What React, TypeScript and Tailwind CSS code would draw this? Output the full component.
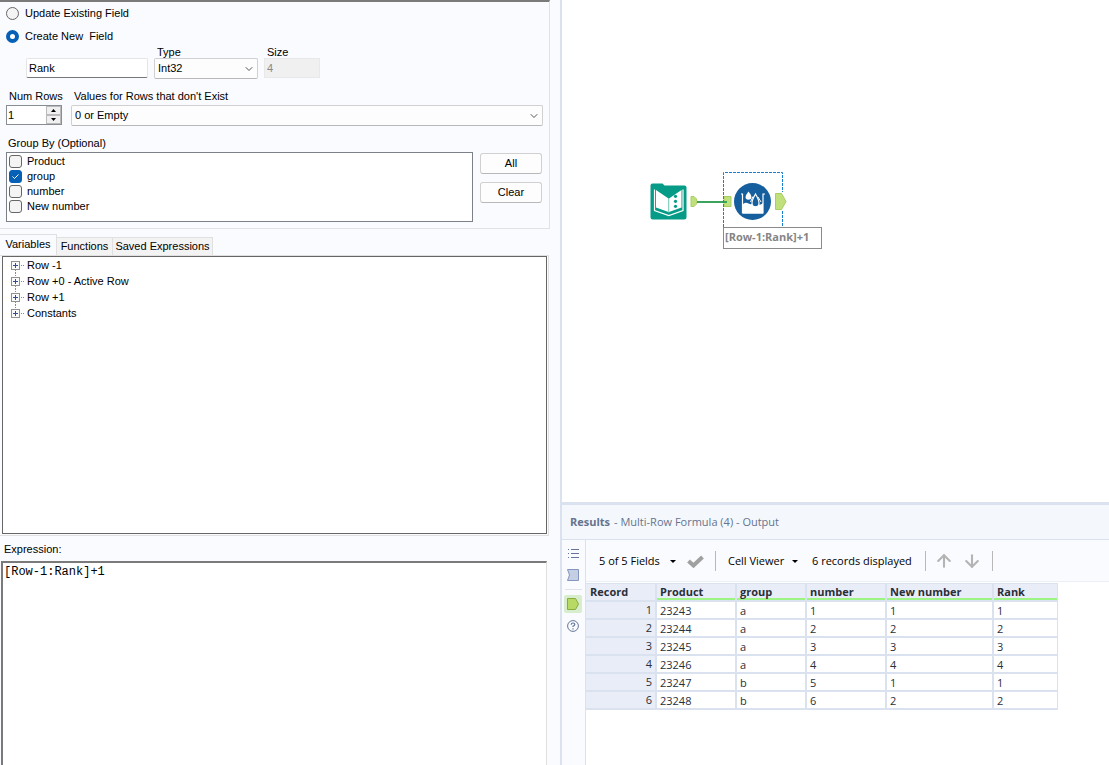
import { useState } from "react";
import type { ReactNode } from "react";
import { ArrowDown, ArrowUp, ChevronDown } from "lucide-react";

const groupFields = ["Product", "group", "number", "New number"];
const treeNodes = ["Row -1", "Row +0 - Active Row", "Row +1", "Constants"];

const columns = [
  { name: "Record", width: "w-[71px]" },
  { name: "Product", width: "w-20" },
  { name: "group", width: "w-[70px]" },
  { name: "number", width: "w-20" },
  { name: "New number", width: "w-[107px]" },
  { name: "Rank", width: "w-16" },
];

const records = [
  ["23243", "a", "1", "1", "1"],
  ["23244", "a", "2", "2", "2"],
  ["23245", "a", "3", "3", "3"],
  ["23246", "a", "4", "4", "4"],
  ["23247", "b", "5", "1", "1"],
  ["23248", "b", "6", "2", "2"],
];

function Radio({ id, label, defaultChecked }: { id: string; label: string; defaultChecked?: boolean }) {
  return (
    <>
      <input
        id={id}
        type="radio"
        name="mode"
        defaultChecked={defaultChecked}
        className="size-[13px] appearance-none rounded-full border border-[#666] bg-[#f4f4f4] checked:border-4 checked:border-[#0560b6] checked:bg-white"
      />
      <label htmlFor={id} className="whitespace-pre">{label}</label>
    </>
  );
}

function Select({ id, value }: { id: string; value: string }) {
  return (
    <div className="relative">
      <select
        id={id}
        defaultValue={value}
        className="block h-[21px] w-full appearance-none rounded-xs border border-[#d0d0d0] border-b-[#b8b8b8] bg-[#fdfdfd] pl-[3px] pr-5"
      >
        <option>{value}</option>
      </select>
      <ChevronDown className="pointer-events-none absolute right-[3px] top-[5px] size-3 text-[#555]" strokeWidth={2} />
    </div>
  );
}

function FieldSettings() {
  const [rows, setRows] = useState(1);

  return (
    <section className="mr-[10px] border-r border-b border-t-2 border-[#e0e2e6] border-t-[#7a7a7a] pb-[6px]">
      <div className="flex h-[23px] items-center gap-[6px] pl-[6px]">
        <Radio id="update" label="Update Existing Field" />
      </div>
      <div className="flex h-[21px] items-center gap-[6px] pl-[6px] pt-px">
        <Radio id="create" label="Create New  Field" defaultChecked />
      </div>
      <div className="flex items-start gap-[6px] pl-[26px]">
        <input
          aria-label="Field name"
          defaultValue="Rank"
          className="mt-3 h-5 w-[122px] rounded-xs border border-[#e5e5e5] border-b-[#777] bg-white px-[2px]"
        />
        <div className="w-[104px]">
          <label htmlFor="type" className="block pl-[3px] leading-3">Type</label>
          <Select id="type" value="Int32" />
        </div>
        <div className="w-14">
          <label htmlFor="size" className="block pl-[3px] leading-3">Size</label>
          <input
            id="size"
            disabled
            defaultValue="4"
            className="block h-5 w-full border border-[#e8e8e8] bg-[#f0f0f0] px-[2px] text-[#888]"
          />
        </div>
      </div>

      <div className="mt-[11px] flex gap-[9px] pl-[6px] pr-[6px]">
        <div className="w-14">
          <label htmlFor="rows" className="block whitespace-nowrap pl-[3px] leading-3">Num Rows</label>
          <div className="mt-[3px] flex h-5 border border-[#888c94] bg-white">
            <input
              id="rows"
              value={rows}
              onChange={(e) => setRows(Number(e.target.value) || 0)}
              className="min-w-0 flex-1 px-px"
            />
            <div className="flex w-[15px] flex-col">
              <button
                aria-label="Increase"
                onClick={() => setRows(rows + 1)}
                className="flex flex-1 items-center justify-center border border-[#bbb] bg-[#f0f0f0]"
              >
                <svg width="5" height="3" viewBox="0 0 5 3"><path d="M0 3 2.500 0 5 3z" /></svg>
              </button>
              <button
                aria-label="Decrease"
                onClick={() => setRows(rows - 1)}
                className="flex flex-1 items-center justify-center border border-[#bbb] bg-[#f0f0f0]"
              >
                <svg width="5" height="3" viewBox="0 0 5 3"><path d="M0 0 2.500 3 5 0z" /></svg>
              </button>
            </div>
          </div>
        </div>
        <div className="flex-1">
          <label htmlFor="missing" className="mb-[3px] block pl-[3px] leading-3">
            Values for Rows that don't Exist
          </label>
          <Select id="missing" value="0 or Empty" />
        </div>
      </div>

      <p className="mt-[11px] pl-2 leading-3">Group By (Optional)</p>
      <div className="mt-[3px] flex gap-[7px] pl-[6px] pr-[7px]">
        <ul className="h-[70px] flex-1 border border-[#7c8088] bg-white pl-[2px] pt-px">
          {groupFields.map((field) => (
            <li key={field} className="flex h-[15px] items-center gap-[5px]">
              <span className="relative flex">
                <input
                  id={"group-" + field}
                  type="checkbox"
                  defaultChecked={field === "group"}
                  className="peer size-[13px] appearance-none rounded-[3px] border border-[#666] bg-[#f4f4f4] checked:border-[#0560b6] checked:bg-[#0560b6]"
                />
                <svg
                  className="pointer-events-none absolute inset-0 hidden peer-checked:block"
                  width="13"
                  height="13"
                  viewBox="0 0 13 13"
                  fill="none"
                  stroke="#fff"
                >
                  <path d="m3.500 6.500 2 2 4-4" />
                </svg>
              </span>
              <label htmlFor={"group-" + field}>{field}</label>
            </li>
          ))}
        </ul>
        <div className="flex w-[62px] flex-col gap-2 pt-px">
          <button className="h-[21px] rounded-[3px] border border-[#d0d0d0] border-b-[#b8b8b8] bg-[#fdfdfd]">All</button>
          <button className="h-[21px] rounded-[3px] border border-[#d0d0d0] border-b-[#b8b8b8] bg-[#fdfdfd]">Clear</button>
        </div>
      </div>
    </section>
  );
}

function VariableTree() {
  return (
    <section className="mr-[11px] mt-[5px]">
      <div role="tablist" className="flex h-[21px] items-end">
        <button
          role="tab"
          aria-selected="true"
          className="h-[21px] w-[57px] border-r border-t border-[#e0e0e0] pb-[2px]"
        >
          Variables
        </button>
        <button role="tab" className="h-[18px] w-14 border-r border-t border-[#e0e0e0] bg-[#f3f3f3]">Functions</button>
        <button role="tab" className="h-[18px] w-[100px] border-r border-t border-[#e0e0e0] bg-[#f3f3f3]">
          Saved Expressions
        </button>
      </div>
      <div className="border-b border-r border-t border-[#e0e0e0] pb-px pl-[2px] pr-px">
        <ul role="tree" className="h-[278px] border border-[#666] bg-white pl-2">
          {treeNodes.map((node, i) => (
            <li key={node} role="treeitem" className="flex h-4 items-center gap-[3px]">
              <svg width="13" height="16" viewBox="0 0 13 16" fill="none" shapeRendering="crispEdges">
                {i > 0 && <path d="M4.500 0v4" stroke="#888" strokeDasharray="1 1" />}
                {i < treeNodes.length - 1 && <path d="M4.500 13v3" stroke="#888" strokeDasharray="1 1" />}
                <path d="M10 8.500h3" stroke="#888" strokeDasharray="1 1" />
                <rect x="0.500" y="4.500" width="8" height="8" fill="#fafafa" stroke="#919191" />
                <path d="M2 8.500h5M4.500 6v5" stroke="#2f4f9a" />
              </svg>
              {node}
            </li>
          ))}
        </ul>
      </div>
    </section>
  );
}

function Canvas() {
  return (
    <section className="relative min-h-64 flex-1 bg-white">
      <svg className="absolute left-[88px] top-[170px]" width="140" height="60" viewBox="0 0 140 60">
        {/* input tool */}
        <path d="M2.500 13.500h10l2 2H34.500q2 0 2 2V47q0 2.500-2.500 2.500H3Q0.500 49.500 0.500 47V15.500q0-2 2-2z" fill="#069b87" />
        <path d="M6 20 18.500 28.500V42L6 37.500zM31.500 20 19 28.500V42L31.500 37.500z" fill="#fff" />
        <path d="M4.500 19.500V40.500L18.800 45.500 33 40.500V19.500" fill="none" stroke="#fff" strokeWidth="1.200" />
        <path d="M18.800 28.500v14" stroke="#8fd0c6" />
        <circle cx="25.500" cy="26.300" r="1.600" fill="#069b87" />
        <circle cx="25.500" cy="31.300" r="1.600" fill="#069b87" />
        <circle cx="25.500" cy="36.300" r="1.600" fill="#069b87" />
        {/* connection */}
        <path d="M41 26.500h3q3 2 3 5t-3 5h-3z" fill="#bfe07a" stroke="#a9cd62" />
        <path d="M74 26.500h7v10h-7z" fill="#bfe07a" stroke="#a9cd62" />
        <path d="M47 32h30" stroke="#3ba35b" strokeWidth="2" />
        {/* multi-row formula tool */}
        <circle cx="102.500" cy="31.500" r="18.500" fill="#165f9e" />
        <path d="M91 24h1.500V43h20.500V24h2" fill="none" stroke="#fff" strokeWidth="1.200" />
        <path d="M93 34q3-2 5.500-0.500t5 0 4.500 0.500 5-1V43.500H93z" fill="#fff" />
        <path d="M98.500 21.500q4.500 5.500 2.300 7.500-2.300 1.500-4.600 0Q94 27 98.500 21.500z" fill="#fff" />
        <path d="M100.500 32 103 26.500M108 27l3 5" stroke="#fff" />
        <path
          d="M105.500 24q-3.500 6-3.500 9 0 3.800 3.500 3.800t3.500-3.800Q109 30 105.500 24z"
          fill="#165f9e"
          stroke="#fff"
          strokeWidth="1.200"
        />
        <path d="M125.500 23.500h6l4.500 8-4.500 8h-6z" fill="#bfe07a" stroke="#a9cd62" />
        <path d="M73.500 57V2.500h59V22M132.500 41v16" fill="none" stroke="#1b7fd0" strokeDasharray="3 1" />
      </svg>
      <div className="absolute left-[161px] top-[227px] h-[22px] w-[99px] border border-[#8a8a8a] bg-white px-px font-['Open_Sans',sans-serif] text-[11px] font-bold leading-[18px] text-[#858585]">
        [Row-1:Rank]+1
      </div>
    </section>
  );
}

function RailButton({ label, active, children }: { label: string; active?: boolean; children: ReactNode }) {
  return (
    <button
      aria-label={label}
      className={
        active
          ? "flex size-[18px] items-center justify-center rounded-xs bg-[#d8ecce]"
          : "flex size-[18px] items-center justify-center"
      }
    >
      {children}
    </button>
  );
}

function Results() {
  return (
    <section className="flex min-h-[263px] flex-col border-t-3 border-[#dae2f0] bg-white font-['Open_Sans',sans-serif] text-[11px]">
      <h2 className="flex h-[35px] items-center gap-1 border-b border-[#dae2f0] bg-[#f4f8fd] pl-2 text-[#66738e]">
        <span className="font-bold">Results</span>
        <span>- Multi-Row Formula (4) - Output</span>
      </h2>
      <div className="flex flex-1">
        <nav className="flex w-6 flex-col items-center border-r border-[#dae2f0] bg-[#f9fbfe] pt-1">
          <RailButton label="Messages">
            <svg width="11" height="10" viewBox="0 0 11 10" stroke="#66759a" shapeRendering="crispEdges">
              <path d="M0 1.500h1M0 5.500h1M0 9.500h1M3 1.500h8M3 5.500h8M3 9.500h8" />
            </svg>
          </RailButton>
          <div className="mt-1 flex">
            <RailButton label="Input data">
              <svg width="12" height="12" viewBox="0 0 12 12">
                <path d="M0.500 0.500h11v11h-11l2-5.500z" fill="#c5cfe4" stroke="#8496bd" />
              </svg>
            </RailButton>
          </div>
          <div className="my-[5px] h-px w-[17px] bg-[#dde2ec]" />
          <RailButton label="Output data" active>
            <svg width="12" height="12" viewBox="0 0 12 12">
              <path d="M0.500 0.500h8L11.500 6l-3 5.500h-8z" fill="#b9d965" stroke="#87ac43" />
            </svg>
          </RailButton>
          <div className="mt-1 flex">
            <RailButton label="Help">
              <svg width="12" height="12" viewBox="0 0 12 12" fill="none" stroke="#66759a">
                <circle cx="6" cy="6" r="5.400" />
                <path d="M4.200 4.800q0-1.800 1.800-1.800t1.800 1.500Q7.800 5.500 6 6.200V7M6 8.200v1.200" strokeWidth="1.200" />
              </svg>
            </RailButton>
          </div>
        </nav>
        <div className="min-w-0 flex-1">
          <div className="flex h-[42px] items-center whitespace-nowrap border-b border-[#eceff5] bg-[#fafbfe] pl-[13px] pt-px text-black">
            <button className="flex w-[88px] items-center gap-[10px]">
              5 of 5 Fields
              <svg width="6" height="3" viewBox="0 0 6 3"><path d="M0 0h6L3 3z" /></svg>
            </button>
            <button aria-label="Apply">
              <svg width="17" height="13" viewBox="0 0 17 13" fill="none" stroke="#a0a0a0" strokeWidth="4">
                <path d="m1.500 6 5 4.500L15.500 2" />
              </svg>
            </button>
            <div className="ml-[11px] h-5 w-px bg-[#b8b8b8]" />
            <button className="ml-3 flex w-[84px] items-center gap-2">
              Cell Viewer
              <svg width="6" height="3" viewBox="0 0 6 3"><path d="M0 0h6L3 3z" /></svg>
            </button>
            <span className="w-[113px]">6 records displayed</span>
            <div className="h-5 w-px bg-[#b8b8b8]" />
            <button aria-label="Previous" className="ml-2">
              <ArrowUp className="size-5 text-[#b4b4b4]" strokeWidth={2.5} />
            </button>
            <button aria-label="Next" className="ml-2">
              <ArrowDown className="size-5 text-[#b4b4b4]" strokeWidth={2.5} />
            </button>
            <div className="ml-[10px] h-5 w-px bg-[#b8b8b8]" />
          </div>
          <table className="mt-px w-[472px] table-fixed border-separate border-spacing-0 border-t border-[#dae2f0] text-left text-[#2a2f3a]">
            <thead>
              <tr>
                {columns.map((col, i) => (
                  <th
                    key={col.name}
                    className={`${col.width} h-[18px] border-b-2 border-r-2 border-[#dae2f0] bg-[#e9edf8] p-0 font-bold leading-4 last:border-r`}
                  >
                    <div className={i === 0 ? "h-4 pl-1" : "h-4 border-b-2 border-[#9cf582] pl-[3px]"}>{col.name}</div>
                  </th>
                ))}
              </tr>
            </thead>
            <tbody>
              {records.map((record, i) => (
                <tr key={record[0]}>
                  <td className="h-[18px] border-b-2 border-r-2 border-[#dae2f0] bg-[#e9edf8] p-0 pr-[3px] text-right leading-4">
                    {i + 1}
                  </td>
                  {record.map((value, j) => (
                    <td
                      key={j}
                      className="h-[18px] border-b-2 border-r-2 border-[#dae2f0] p-0 pl-[3px] pt-[2px] leading-[14px] last:border-r"
                    >
                      {value}
                    </td>
                  ))}
                </tr>
              ))}
            </tbody>
          </table>
        </div>
      </div>
    </section>
  );
}

export default function App() {
  return (
    <div className="grid min-h-screen grid-cols-[51fr_50fr]">
      <main className="flex flex-col bg-[#fafbfe] font-['Liberation_Sans',sans-serif] text-[11px] text-black">
        <FieldSettings />
        <VariableTree />
        <label htmlFor="expression" className="mt-[7px] pl-1 leading-3">Expression:</label>
        <textarea
          id="expression"
          defaultValue="[Row-1:Rank]+1"
          spellCheck={false}
          className="ml-px mr-[13px] mt-[6px] flex-1 resize-none border-l-2 border-r border-t-2 border-[#e0e0e0] border-l-[#7a7a7a] border-t-[#7a7a7a] bg-white px-px pt-px font-['Liberation_Mono',monospace] text-[12px] leading-4"
        />
      </main>
      <div className="flex min-w-0 flex-col border-l-2 border-[#dae2f0]">
        <Canvas />
        <Results />
      </div>
    </div>
  );
}
